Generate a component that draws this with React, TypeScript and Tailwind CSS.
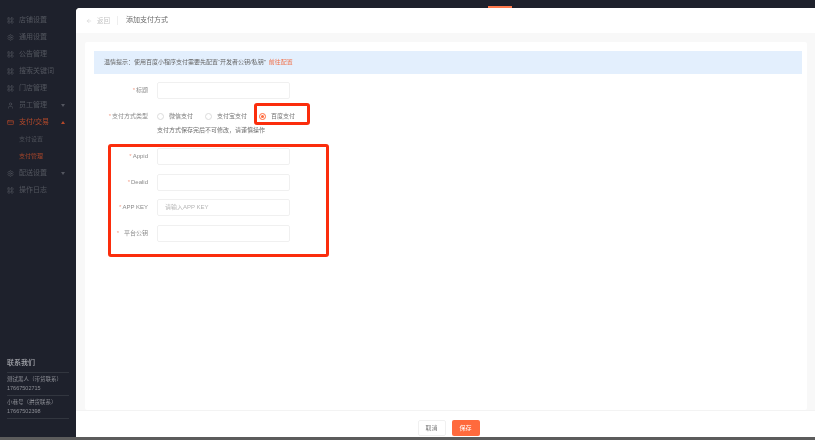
import { ArrowLeft, LayoutGrid, Settings, User, CreditCard } from "lucide-react";

const font = { fontFamily: '"Liberation Sans", "Noto Sans CJK SC", sans-serif' };

function NavItem({ label, icon, arrow, active }: { label: string; icon: "grid" | "gear" | "user" | "card"; arrow?: "down" | "up"; active?: boolean }) {
  const cls = "w-[7px] h-[7px] shrink-0";
  return (
    <div className={`h-[17px] flex items-center pl-[7px] pr-[11px] text-[7px] ${active ? "text-[#b5492a]" : "text-[#53565f]"}`}>
      {icon === "grid" && <LayoutGrid className={cls} />}
      {icon === "gear" && <Settings className={cls} />}
      {icon === "user" && <User className={cls} />}
      {icon === "card" && <CreditCard className={cls} />}
      <span className="ml-[5px] flex-1 whitespace-nowrap">{label}</span>
      {arrow && (
        <svg viewBox="0 0 4 3" className="w-[4px] h-[3px] fill-current">
          <polygon points={arrow === "down" ? "0,0 4,0 2,3" : "0,3 4,3 2,0"} />
        </svg>
      )}
    </div>
  );
}

function Row({ label, placeholder, pad }: { label: string; placeholder?: string; pad?: boolean }) {
  return (
    <div className="flex items-center h-[17px]">
      <div className="w-[54px] flex justify-end whitespace-nowrap text-[6px] text-[#8a8a8a]">
        <span className={`text-[#f3a08c] ${pad ? "mr-[5px]" : "mr-[1px]"}`}>*</span>
        <span>{label}</span>
      </div>
      <div className="ml-[9px] w-[133px] h-[17px] border border-[#f0f0f0] rounded-[2px] flex items-center pl-[7px] text-[6px] text-[#b5b5b5]">
        {placeholder}
      </div>
    </div>
  );
}

function Radio({ label, on, w }: { label: string; on?: boolean; w: string }) {
  return (
    <div className={`flex items-center ${w}`}>
      <span className={`w-[7px] h-[7px] rounded-full border flex items-center justify-center ${on ? "border-[#ff6a3d]" : "border-[#dcdcdc]"}`}>
        {on && <span className="w-[3px] h-[3px] rounded-full bg-[#ff6a3d]" />}
      </span>
      <span className="ml-[5px] text-[6px] text-[#777] whitespace-nowrap">{label}</span>
    </div>
  );
}

export default function App() {
  return (
    <div className="relative w-[815px] h-[440px] overflow-hidden bg-[#1e212c] flex flex-col blur-[0.5px]" style={font}>
      <div className="relative h-[8px] shrink-0">
        <div className="absolute left-[488px] top-[6px] w-[24px] h-[2px] bg-[#ff7a4d]" />
      </div>
      <div className="flex flex-1 min-h-0">
        <aside className="w-[76px] shrink-0 flex flex-col justify-between pt-[4px] pb-[21px]">
          <nav className="flex flex-col">
            <NavItem label="店铺设置" icon="grid" />
            <NavItem label="通用设置" icon="gear" />
            <NavItem label="公告管理" icon="grid" />
            <NavItem label="搜索关键词" icon="grid" />
            <NavItem label="门店管理" icon="grid" />
            <NavItem label="员工管理" icon="user" arrow="down" />
            <NavItem label="支付/交易" icon="card" arrow="up" active />
            <div className="h-[17px] flex items-center pl-[19px] text-[6px] text-[#4d5059]">支付设置</div>
            <div className="h-[17px] flex items-center pl-[19px] text-[6px] text-[#a8462a]">支付管理</div>
            <NavItem label="配送设置" icon="gear" arrow="down" />
            <NavItem label="操作日志" icon="grid" />
          </nav>
          <div className="mx-[7px] flex flex-col text-[#8c8e95]">
            <div className="h-[18px] flex items-center text-[7px] font-medium text-[#a6a8ae] border-b border-[#32363f]">联系我们</div>
            <div className="h-[23px] flex flex-col justify-center text-[5.5px] leading-[9px] border-b border-[#32363f]">
              <span className="whitespace-nowrap">测试黑人（带货联系）</span>
              <span>17667502715</span>
            </div>
            <div className="h-[23px] flex flex-col justify-center text-[5.5px] leading-[9px] border-b border-[#32363f]">
              <span className="whitespace-nowrap">小巷号（拱货联系）</span>
              <span>17667502398</span>
            </div>
          </div>
        </aside>
        <main className="relative flex-1 flex flex-col bg-[#f8f8f8] rounded-tl-[4px] overflow-hidden mb-[3px]">
          <header className="h-[25px] shrink-0 bg-white flex items-center pl-[10px] text-[7px]">
            <ArrowLeft className="w-[6px] h-[6px] text-[#c9c9c9]" />
            <span className="ml-[5px] text-[#c4c4c4] text-[6.5px]">返回</span>
            <span className="ml-[7px] w-px h-[9px] bg-[#eeeeee]" />
            <span className="ml-[8px] text-[#6a6a6a]">添加支付方式</span>
          </header>
          <div className="flex-1 pt-[9px] pl-[9px] pr-[8px] min-h-0">
            <div className="h-full bg-white pt-[9px] px-[9px] rounded-[2px]">
              <div className="h-[23px] w-[708px] bg-[#e3effd] flex items-center pl-[10px] text-[6px] text-[#666]">
                温情提示：使用百度小程序支付需要先配置“开发者公钥/私钥”
                <span className="ml-[3px] text-[#f0714a]">前往配置</span>
              </div>
              <div className="pt-[8px]">
                <Row label="标题" />
                <div className="flex items-center h-[17px] mt-[9px]">
                  <div className="w-[54px] flex justify-end whitespace-nowrap text-[6px] text-[#8a8a8a]">
                    <span className="text-[#f3a08c] mr-[1px]">*</span>
                    <span>支付方式类型</span>
                  </div>
                  <div className="ml-[9px] flex items-center">
                    <Radio label="微信支付" w="w-[48px]" />
                    <Radio label="支付宝支付" w="w-[54px]" />
                    <Radio label="百度支付" on w="w-[40px]" />
                  </div>
                </div>
                <div className="ml-[63px] mt-[1px] h-[9px] flex items-center text-[6px] text-[#6e6e6e]">支付方式保存完后不可修改，请谨慎操作</div>
                <div className="mt-[13px] flex flex-col gap-[8.5px]">
                  <Row label="Appid" />
                  <Row label="Dealid" />
                  <Row label="APP KEY" placeholder="请输入APP KEY" />
                  <Row label="平台公钥" pad />
                </div>
              </div>
            </div>
          </div>
          <footer className="h-[27px] shrink-0 bg-white border-t border-[#f3f3f3] flex items-end justify-center gap-[6px] pl-[6px] pb-[1px]">
            <div className="w-[28px] h-[16px] border border-[#f0f0f0] rounded-[2px] flex items-center justify-center text-[6px] text-[#777]">取消</div>
            <div className="w-[28px] h-[16px] bg-[#ff6a3d] rounded-[2px] flex items-center justify-center text-[6px] text-white">保存</div>
          </footer>
        </main>
      </div>
      <div className="h-[3px] bg-[#5c5c5c] absolute bottom-0 left-0 right-0" />
      <div className="absolute left-[254px] top-[103px] w-[56px] h-[22px] border-[3px] border-[#fb2d0c] rounded-[3px]" />
      <div className="absolute left-[108px] top-[144px] w-[221px] h-[113px] border-[3px] border-[#fb2d0c] rounded-[3px]" />
    </div>
  );
}
